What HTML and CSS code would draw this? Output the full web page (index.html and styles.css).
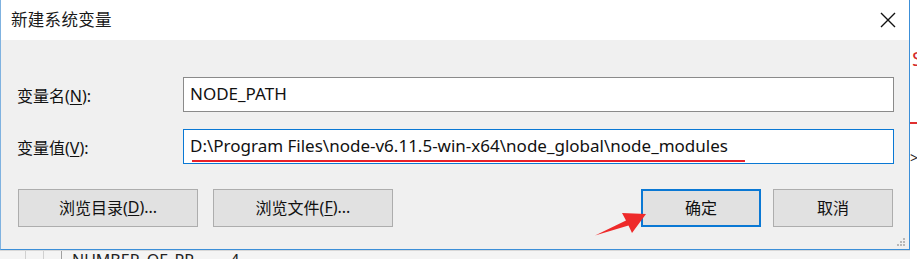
FILE: index.html
```html
<!DOCTYPE html>
<html lang="zh-CN">
<head>
<meta charset="utf-8">
<title>新建系统变量</title>
<link rel="stylesheet" href="styles.css">
</head>
<body>
<div class="scene">
  <div class="dialog">
    <div class="titlebar">
      <span class="title">新建系统变量</span>
      <svg class="close" width="16" height="16" viewBox="0 0 16 16"><path d="M1 1 L15 15 M15 1 L1 15" stroke="#111" stroke-width="1.4" fill="none"/></svg>
    </div>
    <div class="body">
      <div class="form">
        <label class="label">变量名(<u>N</u>):</label>
        <div class="field">NODE_PATH</div>
        <label class="label">变量值(<u>V</u>):</label>
        <div class="field focus">D:\Program Files\node-v6.11.5-win-x64\node_global\node_modules<span class="redline"></span></div>
      </div>
      <div class="buttons">
        <div class="group">
          <div class="btn wide">浏览目录(<u>D</u>)...</div>
          <div class="btn wide">浏览文件(<u>F</u>)...</div>
        </div>
        <div class="group right">
          <div class="btn narrow default">确定</div>
          <div class="btn narrow">取消</div>
        </div>
      </div>
      <svg class="grip" width="10" height="10" viewBox="0 0 10 10">
        <rect x="7" y="1" width="2" height="2" fill="#b8b8b8"/>
        <rect x="4" y="4" width="2" height="2" fill="#b8b8b8"/>
        <rect x="7" y="4" width="2" height="2" fill="#b8b8b8"/>
        <rect x="1" y="7" width="2" height="2" fill="#b8b8b8"/>
        <rect x="4" y="7" width="2" height="2" fill="#b8b8b8"/>
        <rect x="7" y="7" width="2" height="2" fill="#b8b8b8"/>
      </svg>
    </div>
  </div>
  <div class="side">
    <span class="side-s">S</span>
    <span class="side-line"></span>
    <span class="side-arrow">&gt;</span>
  </div>
  <div class="below">
    <span class="col c1"></span>
    <span class="col c2"></span>
    <span class="col c3"></span>
    <span class="bname">NUMBER_OF_PR</span>
    <span class="bval">4</span>
  </div>
  <svg class="arrow" width="917" height="259" viewBox="0 0 917 259">
    <polygon points="595,235.5 628.5,225.5 632,233 646,214 622,213 626,220.5" fill="#ee2a2a"/>
  </svg>
</div>
</body>
</html>
```

FILE: styles.css
```css
* { box-sizing: border-box; }
html, body { margin: 0; padding: 0; }
body {
  width: 917px;
  height: 259px;
  overflow: hidden;
  background: #ffffff;
  font-family: "Noto Sans", "Noto Sans CJK SC", sans-serif;
  font-size: 16px;
  color: #111;
}
u { text-decoration: underline; text-underline-offset: 2px; text-decoration-thickness: 1px; }

.scene {
  position: relative;
  display: grid;
  grid-template-columns: 910px 1fr;
  grid-template-rows: 250px 1fr;
  width: 917px;
  height: 259px;
}

.dialog {
  grid-column: 1;
  grid-row: 1;
  display: flex;
  flex-direction: column;
  border-left: 1px solid #7fb2e0;
  border-right: 1px solid #3c8fd8;
  border-bottom: 1px solid #3c8fd8;
  background: #f0f0f0;
}

.titlebar {
  height: 40px;
  background: #ffffff;
  display: flex;
  align-items: center;
  justify-content: space-between;
  padding: 0 13px 2px 10px;
}
.title { font-size: 16.5px; color: #1a1a1a; letter-spacing: 0.3px; }
.close { display: block; margin-top: 1px; }

.body {
  position: relative;
  flex: 1;
  padding: 37px 15px 0 16px;
}

.form {
  display: grid;
  grid-template-columns: 166px 1fr;
  row-gap: 17px;
  align-items: center;
}
.label { font-size: 16px; padding-top: 1px; }
.field {
  position: relative;
  height: 35px;
  background: #ffffff;
  border: 1px solid #8a8a8a;
  padding: 0 0 0 6px;
  display: flex;
  align-items: center;
  font-size: 17px;
  white-space: nowrap;
  overflow: hidden;
  padding-bottom: 2px;
}
.field.focus { border-color: #0a78d4; }
.redline {
  position: absolute;
  left: 8px;
  top: 30px;
  width: 553px;
  height: 2px;
  background: #e8202a;
}

.buttons {
  display: flex;
  justify-content: space-between;
  margin-top: 25px;
  padding-left: 1px;
  padding-right: 1px;
}
.group { display: flex; gap: 15px; }
.group.right { gap: 12px; }
.btn {
  height: 38px;
  background: #e1e1e1;
  border: 1px solid #adadad;
  display: flex;
  align-items: center;
  justify-content: center;
  font-size: 16px;
  padding-bottom: 2px;
}
.btn.wide { width: 180px; }
.btn.narrow { width: 120px; }
.btn.default { border: 2px solid #0a78d4; }

.grip {
  position: absolute;
  right: 3px;
  bottom: 2px;
}

.side {
  grid-column: 2;
  grid-row: 1 / span 2;
  position: relative;
  overflow: hidden;
  background: #ffffff;
  display: flex;
  flex-direction: column;
}
.side-s {
  color: #d42a2a;
  font-size: 20px;
  line-height: 20px;
  margin-top: 49px;
  padding-left: 2px;
}
.side-line {
  height: 2px;
  background: #e03030;
  margin-top: 53px;
}
.side-arrow {
  font-size: 14px;
  line-height: 14px;
  margin-top: 27px;
  color: #222;
}

.below {
  grid-column: 1;
  grid-row: 2;
  position: relative;
  display: flex;
  align-items: flex-start;
  background: #f4f4f4;
  overflow: hidden;
  border-top: 1px solid #d8d8d8;
}
.col { width: 1px; height: 9px; background: #d0d0d0; }
.c1 { margin-left: 25px; }
.c2 { margin-left: 17px; }
.c3 { margin-left: 17px; background: #a0a0a0; }
.bname { margin-left: 10px; font-size: 16px; line-height: 16px; margin-top: 1px; color: #222; }
.bval { margin-left: 36px; font-size: 16px; line-height: 16px; margin-top: 1px; color: #222; }

.arrow {
  position: absolute;
  left: 0;
  top: 0;
  pointer-events: none;
}
```
